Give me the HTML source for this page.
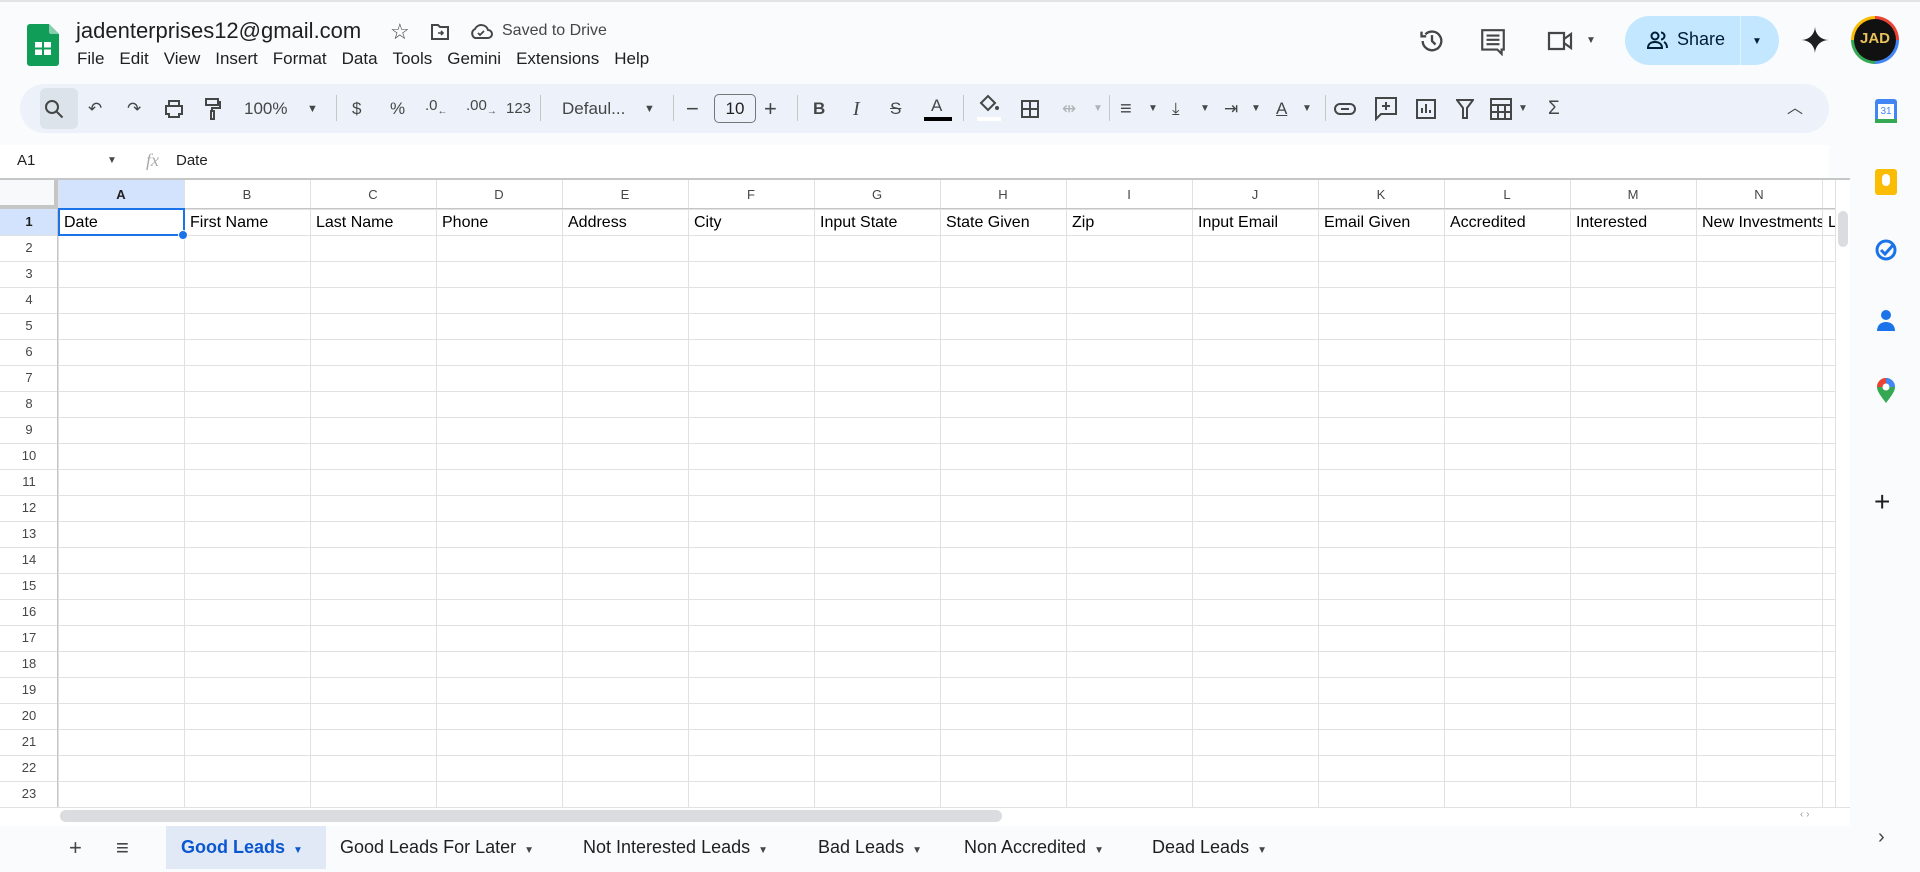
<!DOCTYPE html>
<html><head><meta charset="utf-8">
<style>
*{box-sizing:border-box;margin:0;padding:0}
body{width:1920px;height:869px;overflow:hidden;background:#f9fbfd;font-family:"Liberation Sans",Arial,sans-serif;color:#1f1f1f;position:relative}
.a{position:absolute}
.t{position:absolute;white-space:nowrap}
.menu span{margin-right:15px}
.tb{position:absolute;top:109px;font-size:17px;line-height:20px;color:#444746;transform:translateY(-50%);white-space:nowrap}
.sep{position:absolute;top:95px;width:1px;height:26px;background:#c4c7c5}
.ch{position:absolute;top:180px;height:29px;width:126px;text-align:center;line-height:29px;font-size:13px;color:#444746}
.rn{position:absolute;left:0;width:58px;height:26px;text-align:center;line-height:26px;font-size:13px;color:#444746}
.cell{position:absolute;top:209px;height:26px;line-height:28px;font-size:16px;padding-left:6px;color:#000;white-space:nowrap}
.tab{position:absolute;top:826px;height:43px;line-height:43px;font-size:18px;color:#1f1f1f;white-space:nowrap}
.dd{font-size:10px;margin-left:8px;color:#444746}
</style></head><body>
<div class="a" style="left:0;top:0;width:1920px;height:2px;background:#e3e3e3"></div>
<svg class="a" style="left:27px;top:24px" width="32" height="42" viewBox="0 0 32 42"><path d="M3 0h19l10 10v29a3 3 0 0 1-3 3H3a3 3 0 0 1-3-3V3a3 3 0 0 1 3-3z" fill="#0f9d58"/><path d="M22 0l10 10h-8a2 2 0 0 1-2-2z" fill="#87ceac"/><rect x="8" y="18" width="16" height="13" fill="#fff"/><path d="M8 24.5h16M16 18v13" stroke="#0f9d58" stroke-width="2"/></svg>
<div class="t" style="left:76px;top:18px;font-size:22px;color:#1f1f1f">jadenterprises12@gmail.com</div>
<div class="t" style="left:390px;top:19px;font-size:22px;color:#444746">☆</div>
<svg class="a" style="left:430px;top:23px" width="20" height="18" viewBox="0 0 20 18"><path d="M2 2h6l2 2h8v12H2z" fill="none" stroke="#444746" stroke-width="2"/><path d="M8 10h5M11 8l2 2-2 2" stroke="#444746" stroke-width="1.6" fill="none"/></svg>
<svg class="a" style="left:469px;top:22px" width="24" height="18" viewBox="0 0 24 18"><path d="M6 16h13a4 4 0 0 0 0-8 7 7 0 0 0-13-1 5 5 0 0 0 0 9z" fill="none" stroke="#444746" stroke-width="2"/><path d="M9 11l2 2 4-4" stroke="#444746" stroke-width="1.8" fill="none"/></svg>
<div class="t" style="left:502px;top:22px;font-size:16px;color:#444746">Saved to Drive</div>
<div class="t menu" style="left:77px;top:49px;font-size:17px;color:#1f1f1f"><span>File</span><span>Edit</span><span>View</span><span>Insert</span><span>Format</span><span>Data</span><span>Tools</span><span>Gemini</span><span>Extensions</span><span>Help</span></div>
<svg class="a" style="left:1418px;top:27px" width="28" height="28" viewBox="0 0 24 24"><path d="M4 12a8 8 0 1 0 2.3-5.7" fill="none" stroke="#444746" stroke-width="2"/><path d="M3 4v4h4" fill="none" stroke="#444746" stroke-width="2"/><path d="M12 7v5l3 3" fill="none" stroke="#444746" stroke-width="2"/></svg>
<svg class="a" style="left:1480px;top:28px" width="26" height="28" viewBox="0 0 24 26"><path d="M2 2h20v18h-2v4l-4-4H2z" fill="none" stroke="#444746" stroke-width="2"/><path d="M6 7h12M6 11h12M6 15h12" stroke="#444746" stroke-width="2"/></svg>
<svg class="a" style="left:1546px;top:30px" width="28" height="22" viewBox="0 0 28 22"><path d="M3 3h15v16H3z" fill="none" stroke="#444746" stroke-width="2.2"/><path d="M18 9l7-5v14l-7-5" fill="none" stroke="#444746" stroke-width="2.2"/></svg>
<div class="t" style="left:1586px;top:35px;font-size:10px;color:#444746">▼</div>
<div class="a" style="left:1625px;top:16px;width:154px;height:49px;border-radius:25px;background:#c2e7ff"></div>
<div class="a" style="left:1740px;top:16px;width:1px;height:49px;background:#f9fbfd;opacity:.6"></div>
<svg class="a" style="left:1647px;top:30px" width="22" height="20" viewBox="0 0 22 20"><circle cx="8" cy="6" r="3.5" fill="none" stroke="#001d35" stroke-width="2"/><path d="M1 18c0-4 3-6 7-6s7 2 7 6z" fill="none" stroke="#001d35" stroke-width="2"/><path d="M14 2.5a3.5 3.5 0 0 1 0 7M17 12c2 1 3 3 3 6" fill="none" stroke="#001d35" stroke-width="2"/></svg>
<div class="t" style="left:1677px;top:29px;font-size:18px;color:#001d35">Share</div>
<div class="t" style="left:1752px;top:36px;font-size:10px;color:#001d35">▼</div>
<svg class="a" style="left:1801px;top:26px" width="28" height="28" viewBox="0 0 24 24"><path d="M12 0C12 7 17 12 24 12 17 12 12 17 12 24 12 17 7 12 0 12 7 12 12 7 12 0z" fill="#1f1f1f"/></svg>
<div class="a" style="left:1851px;top:16px;width:48px;height:48px;border-radius:50%;background:conic-gradient(#ea4335 0 25%,#4285f4 25% 50%,#34a853 50% 75%,#fbbc05 75%)"></div>
<div class="a" style="left:1854px;top:19px;width:42px;height:42px;border-radius:50%;background:#111;color:#e8c15a;font-weight:bold;font-size:15px;text-align:center;line-height:40px">JAD</div>
<div class="a" style="left:20px;top:84px;width:1809px;height:49px;border-radius:25px;background:#edf2fa"></div>
<div class="a" style="left:40px;top:88px;width:38px;height:41px;background:#dde3ea;border-radius:6px"></div>
<svg class="a" style="left:44px;top:99px" width="20" height="20" viewBox="0 0 20 20"><circle cx="8" cy="8" r="6" fill="none" stroke="#444746" stroke-width="2"/><path d="M12.5 12.5l6 6" stroke="#444746" stroke-width="2"/></svg>
<div class="tb" style="left:88px">↶</div><div class="tb" style="left:127px">↷</div>
<svg class="a" style="left:164px;top:99px" width="20" height="20" viewBox="0 0 20 20"><path d="M5 2h10v5H5zM2 7h16v8h-3v3H5v-3H2z" fill="none" stroke="#444746" stroke-width="2"/></svg>
<svg class="a" style="left:205px;top:98px" width="16" height="22" viewBox="0 0 16 22"><path d="M1 1h12v6H1zM13 4h2v6H7v3M6 13h3v8H6z" fill="none" stroke="#444746" stroke-width="2"/></svg>
<div class="tb" style="left:244px">100%</div><div class="tb" style="left:307px;font-size:11px">▼</div>
<div class="sep" style="left:336px"></div>
<div class="tb" style="left:352px">$</div><div class="tb" style="left:390px">%</div>
<div class="tb" style="left:425px;font-size:15px">.0<sub style="font-size:10px">←</sub></div>
<div class="tb" style="left:466px;font-size:15px">.00<sub style="font-size:10px">→</sub></div>
<div class="tb" style="left:506px;font-size:15px">123</div>
<div class="sep" style="left:540px"></div>
<div class="tb" style="left:562px">Defaul...</div><div class="tb" style="left:644px;font-size:11px">▼</div>
<div class="sep" style="left:673px"></div>
<div class="tb" style="left:686px;font-size:22px">−</div>
<div class="a" style="left:714px;top:94px;width:42px;height:29px;border:1px solid #747775;border-radius:5px;text-align:center;line-height:27px;font-size:17px;color:#1f1f1f">10</div>
<div class="tb" style="left:764px;font-size:22px">+</div>
<div class="sep" style="left:797px"></div>
<div class="tb" style="left:813px;font-weight:bold">B</div>
<div class="tb" style="left:853px;font-style:italic;font-family:'Liberation Serif',serif;font-size:20px">I</div>
<div class="tb" style="left:890px;text-decoration:line-through">S</div>
<div class="tb" style="left:931px;top:106px">A</div>
<div class="a" style="left:924px;top:117px;width:28px;height:4px;background:#000"></div>
<div class="sep" style="left:963px"></div>
<svg class="a" style="left:977px;top:93px" width="24" height="28" viewBox="0 0 24 28"><path d="M4 10l7-7 7 7-7 7z" fill="none" stroke="#444746" stroke-width="2"/><circle cx="20" cy="15" r="2" fill="#444746"/><rect x="0" y="24" width="24" height="4" fill="#fff"/></svg>
<svg class="a" style="left:1020px;top:99px" width="20" height="20" viewBox="0 0 20 20"><path d="M2 2h16v16H2zM10 2v16M2 10h16" fill="none" stroke="#444746" stroke-width="2"/></svg>
<div class="tb" style="left:1062px;color:#b0b3b5">⇹</div><div class="tb" style="left:1093px;font-size:10px;color:#b0b3b5">▼</div>
<div class="sep" style="left:1109px"></div>
<div class="tb" style="left:1120px;font-size:20px">≡</div><div class="tb" style="left:1148px;font-size:10px">▼</div>
<div class="tb" style="left:1172px">⤓</div><div class="tb" style="left:1200px;font-size:10px">▼</div>
<div class="tb" style="left:1224px">⇥</div><div class="tb" style="left:1251px;font-size:10px">▼</div>
<div class="tb" style="left:1276px;text-decoration:underline">A</div><div class="tb" style="left:1302px;font-size:10px">▼</div>
<div class="sep" style="left:1325px"></div>
<svg class="a" style="left:1334px;top:103px" width="22" height="12" viewBox="0 0 22 12"><rect x="1" y="1" width="20" height="10" rx="5" fill="none" stroke="#444746" stroke-width="2"/><path d="M7 6h8" stroke="#444746" stroke-width="2"/></svg>
<svg class="a" style="left:1375px;top:97px" width="22" height="24" viewBox="0 0 22 24"><path d="M1 1h20v16H6l-5 5z" fill="none" stroke="#444746" stroke-width="2"/><path d="M11 5v8M7 9h8" stroke="#444746" stroke-width="2"/></svg>
<svg class="a" style="left:1416px;top:99px" width="20" height="20" viewBox="0 0 20 20"><path d="M1 1h18v18H1z" fill="none" stroke="#444746" stroke-width="2"/><path d="M6 14V9M10 14V5M14 14v-3" stroke="#444746" stroke-width="2"/></svg>
<svg class="a" style="left:1456px;top:99px" width="18" height="20" viewBox="0 0 18 20"><path d="M1 1h16l-6 8v10H7V9z" fill="none" stroke="#444746" stroke-width="2"/></svg>
<svg class="a" style="left:1490px;top:98px" width="22" height="22" viewBox="0 0 22 22"><path d="M1 1h20v20H1zM1 7h20M8 7v14M15 7v14M1 14h20" fill="none" stroke="#444746" stroke-width="2"/></svg>
<div class="tb" style="left:1518px;font-size:10px">▼</div>
<div class="tb" style="left:1548px;font-size:19px">Σ</div>
<div class="tb" style="left:1787px;font-size:16px">︿</div>
<div class="a" style="left:0;top:145px;width:1829px;height:33px;background:#fff"></div>
<div class="t" style="left:17px;top:152px;font-size:15px">A1</div>
<div class="t" style="left:107px;top:155px;font-size:10px;color:#444746">▼</div>
<div class="t" style="left:146px;top:150px;font-size:18px;font-style:italic;font-family:'Liberation Serif',serif;color:#aaa">fx</div>
<div class="t" style="left:176px;top:152px;font-size:15px">Date</div>
<div class="a" style="left:0;top:178px;width:1850px;height:2px;background:#c4c7c5"></div>
<div class="a" style="left:0;top:180px;width:1835px;height:627px;background-color:#fff;
background-image:linear-gradient(#e1e1e1 1px,transparent 1px),linear-gradient(90deg,#e1e1e1 1px,transparent 1px);
background-size:126px 26px,126px 26px;background-position:0 29px,58px 0"></div>
<div class="a" style="left:0;top:180px;width:58px;height:627px;background:#fff;background-image:linear-gradient(#e1e1e1 1px,transparent 1px);background-size:58px 26px;background-position:0 29px;border-right:1px solid #c4c7c5"></div>
<div class="a" style="left:0;top:180px;width:1835px;height:29px;background:#fff;background-image:linear-gradient(90deg,#e1e1e1 1px,transparent 1px);background-size:126px 29px;background-position:58px 0;border-bottom:1px solid #c4c7c5"></div>
<div class="a" style="left:0;top:180px;width:58px;height:29px;background:#f8f9fa;border-right:4px solid #c4c7c5;border-bottom:4px solid #c4c7c5"></div>
<div class="a" style="left:59px;top:180px;width:125px;height:28px;background:#d3e3fd"></div>
<div class="a" style="left:0;top:209px;width:57px;height:26px;background:#d3e3fd"></div>
<div class="ch" style="left:58px;font-weight:bold;color:#1f1f1f">A</div><div class="ch" style="left:184px">B</div><div class="ch" style="left:310px">C</div><div class="ch" style="left:436px">D</div><div class="ch" style="left:562px">E</div><div class="ch" style="left:688px">F</div><div class="ch" style="left:814px">G</div><div class="ch" style="left:940px">H</div><div class="ch" style="left:1066px">I</div><div class="ch" style="left:1192px">J</div><div class="ch" style="left:1318px">K</div><div class="ch" style="left:1444px">L</div><div class="ch" style="left:1570px">M</div><div class="ch" style="left:1696px">N</div>
<div class="rn" style="top:209px;font-weight:bold;color:#1f1f1f">1</div><div class="rn" style="top:235px">2</div><div class="rn" style="top:261px">3</div><div class="rn" style="top:287px">4</div><div class="rn" style="top:313px">5</div><div class="rn" style="top:339px">6</div><div class="rn" style="top:365px">7</div><div class="rn" style="top:391px">8</div><div class="rn" style="top:417px">9</div><div class="rn" style="top:443px">10</div><div class="rn" style="top:469px">11</div><div class="rn" style="top:495px">12</div><div class="rn" style="top:521px">13</div><div class="rn" style="top:547px">14</div><div class="rn" style="top:573px">15</div><div class="rn" style="top:599px">16</div><div class="rn" style="top:625px">17</div><div class="rn" style="top:651px">18</div><div class="rn" style="top:677px">19</div><div class="rn" style="top:703px">20</div><div class="rn" style="top:729px">21</div><div class="rn" style="top:755px">22</div><div class="rn" style="top:781px">23</div>
<div class="cell" style="left:58px">Date</div><div class="cell" style="left:184px">First Name</div><div class="cell" style="left:310px">Last Name</div><div class="cell" style="left:436px">Phone</div><div class="cell" style="left:562px">Address</div><div class="cell" style="left:688px">City</div><div class="cell" style="left:814px">Input State</div><div class="cell" style="left:940px">State Given</div><div class="cell" style="left:1066px">Zip</div><div class="cell" style="left:1192px">Input Email</div><div class="cell" style="left:1318px">Email Given</div><div class="cell" style="left:1444px">Accredited</div><div class="cell" style="left:1570px">Interested</div><div class="cell" style="left:1696px;width:126px;overflow:hidden">New Investments</div><div class="cell" style="left:1822px">L</div>
<div class="a" style="left:58px;top:208px;width:127px;height:28px;border:2px solid #1a73e8"></div>
<div class="a" style="left:178px;top:230px;width:10px;height:10px;border-radius:50%;background:#1a73e8;border:1px solid #fff"></div>
<div class="a" style="left:1835px;top:180px;width:15px;height:627px;background:#fff;border-left:1px solid #e1e1e1"></div>
<div class="a" style="left:1838px;top:211px;width:10px;height:36px;border-radius:5px;background:#dadce0"></div>
<div class="a" style="left:0;top:807px;width:1850px;height:19px;background:#fff;border-top:1px solid #e1e1e1"></div>
<div class="a" style="left:60px;top:810px;width:942px;height:12px;border-radius:6px;background:#dadce0"></div>
<div class="t" style="left:1800px;top:809px;font-size:10px;color:#999">‹ ›</div>
<div class="a" style="left:166px;top:826px;width:160px;height:43px;background:#e1e9f7"></div>
<div class="tab" style="left:69px;font-size:22px;color:#444746">+</div>
<div class="tab" style="left:116px;font-size:22px;color:#444746">≡</div>
<div class="tab" style="left:181px;color:#0b57d0;font-weight:bold">Good Leads<span class="dd" style="color:#0b57d0">▼</span></div>
<div class="tab" style="left:340px">Good Leads For Later<span class="dd">▼</span></div>
<div class="tab" style="left:583px">Not Interested Leads<span class="dd">▼</span></div>
<div class="tab" style="left:818px">Bad Leads<span class="dd">▼</span></div>
<div class="tab" style="left:964px">Non Accredited<span class="dd">▼</span></div>
<div class="tab" style="left:1152px">Dead Leads<span class="dd">▼</span></div>
<div class="a" style="left:1875px;top:99px;width:22px;height:24px;border-radius:3px;background:#4285f4"></div>
<div class="a" style="left:1878px;top:104px;width:16px;height:16px;background:#fff;font-size:10px;color:#4285f4;text-align:center;line-height:16px">31</div>
<div class="a" style="left:1875px;top:119px;width:22px;height:4px;background:#34a853"></div>
<div class="a" style="left:1875px;top:169px;width:22px;height:26px;border-radius:3px;background:#fbbc04"></div>
<div class="a" style="left:1882px;top:174px;width:8px;height:12px;border-radius:4px;background:#fff"></div>
<svg class="a" style="left:1874px;top:238px" width="24" height="24" viewBox="0 0 24 24"><circle cx="12" cy="12" r="9" fill="none" stroke="#1a73e8" stroke-width="3"/><path d="M7 12l4 4 9-10" fill="none" stroke="#1a73e8" stroke-width="3"/></svg>
<svg class="a" style="left:1876px;top:309px" width="20" height="24" viewBox="0 0 20 24"><circle cx="10" cy="6" r="5" fill="#1a73e8"/><path d="M1 22c0-6 4-9 9-9s9 3 9 9z" fill="#1a73e8"/></svg>
<svg class="a" style="left:1876px;top:378px" width="20" height="26" viewBox="0 0 20 26"><path d="M10 25C4 17 1 13 1 9a9 9 0 0 1 18 0c0 4-3 8-9 16z" fill="#34a853"/><path d="M1 9a9 9 0 0 1 9-9v9z" fill="#ea4335"/><path d="M10 0a9 9 0 0 1 9 9h-9z" fill="#4285f4"/><circle cx="10" cy="9" r="3.5" fill="#fff"/></svg>
<div class="t" style="left:1874px;top:486px;font-size:28px;color:#1f1f1f">+</div>
<div class="t" style="left:1878px;top:826px;font-size:20px;color:#444746">›</div>
</body></html>
